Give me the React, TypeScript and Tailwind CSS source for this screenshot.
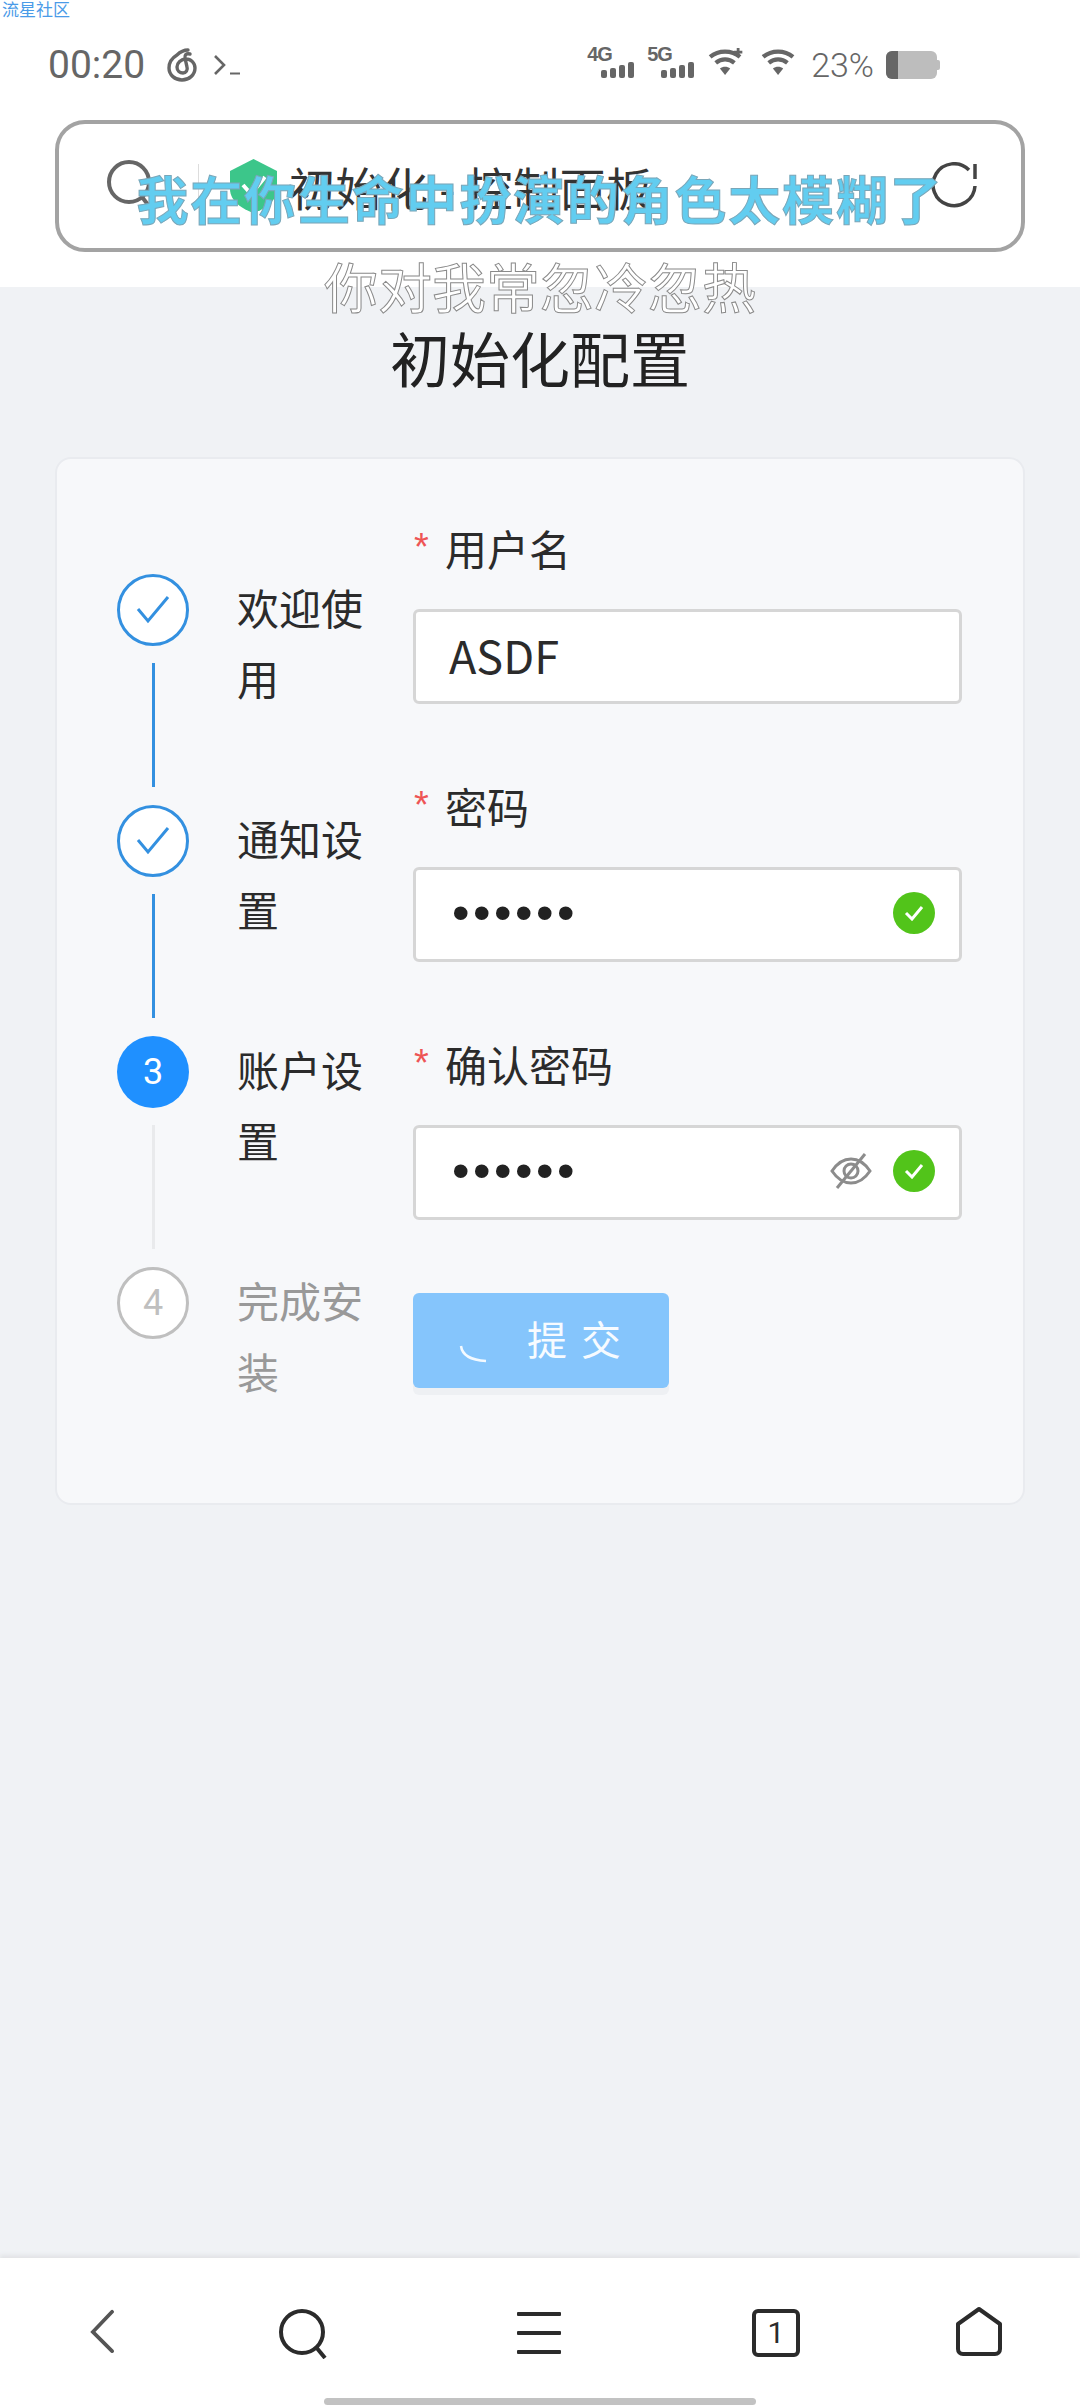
import React from "react";

const cjk = "font-['Noto_Sans_CJK_SC','Noto_Sans',sans-serif]";

const Netease = () => (
  <svg width="30" height="34" viewBox="0 0 30 34" fill="none" stroke="#666" strokeWidth="3.400" strokeLinecap="round">
    <path d="M21 2 C16 2 13 4 10 7 C5 10 2 15 2 20 C2 27 8 32 15 32 C22 32 28 27 28 20 C28 15 24 11 19 11 C14 11 10 15 10 19 C10 23 13 25 16 25 C19 25 21 22 20 19 L18 10 C17.500 7 19 5 23 6" />
  </svg>
);

const Signal = ({ label }: { label: string }) => (
  <div className="relative w-[47px] h-[31px]">
    <span className="absolute left-0 -top-[3px] text-[20px] leading-[20px] font-bold text-[#666] font-['Liberation_Sans',sans-serif] tracking-[-1px]">
      {label}
    </span>
    <div className="absolute right-0 bottom-0 flex items-end gap-[3px]">
      <div className="w-[6px] h-[8px] rounded-[2px] bg-[#666]" />
      <div className="w-[6px] h-[10px] rounded-[2px] bg-[#666]" />
      <div className="w-[6px] h-[13px] rounded-[2px] bg-[#666]" />
      <div className="w-[6px] h-[16px] rounded-[2px] bg-[#666]" />
    </div>
  </div>
);

const Wifi = ({ plus }: { plus?: boolean }) => (
  <svg width="38" height="28" viewBox="0 0 38 30" fill="none" stroke="#666" strokeWidth="4.500">
    <path d="M2 9.500 C11 2 25 2 34 9.500" />
    <path d="M8 16 C14 11 22 11 28 16" />
    <path d="M18 29 L12.500 22 C15.500 19.500 20.500 19.500 23.500 22 Z" fill="#666" stroke="none" />
    {plus && <path d="M32 0 V9 M27.500 4.500 H36.500" stroke="#666" strokeWidth="3" />}
  </svg>
);

const StatusBar = () => (
  <div className="h-[120px] pl-[48px] pr-[140px] pt-[45px] flex items-start justify-between">
    <div className="flex items-center h-[40px]">
      <span className="text-[39px] leading-[40px] text-[#666] font-['Roboto',sans-serif] w-[119px]">00:20</span>
      <Netease />
      <svg className="ml-[16px]" width="28" height="24" viewBox="0 0 28 24" fill="none" stroke="#666" strokeWidth="2.600">
        <path d="M2 3 L11 12 L2 21" />
        <path d="M17 20.500 H27" strokeWidth="2" />
      </svg>
    </div>
    <div className="flex items-center h-[40px] -mt-[3px]">
      <Signal label="4G" />
      <div className="ml-[13px]"><Signal label="5G" /></div>
      <div className="ml-[13px]"><Wifi plus /></div>
      <div className="ml-[15px]"><Wifi /></div>
      <span className="ml-[13px] mt-[5px] text-[34px] leading-[40px] text-[#666] font-['Roboto',sans-serif] font-light">23%</span>
      <div className="ml-[12px] mt-[5px] flex items-center">
        <div className="w-[51px] h-[28px] rounded-[6px] bg-[#bdbdbd] overflow-hidden">
          <div className="w-[12px] h-full bg-[#666]" />
        </div>
        <div className="w-[3px] h-[10px] rounded-r-[2px] bg-[#bdbdbd]" />
      </div>
    </div>
  </div>
);

const AddressBar = () => (
  <div className="mx-[55px] h-[132px] rounded-[30px] border-4 border-[#a3a3a3] bg-white flex items-center pl-[47px] pr-[43px]">
    <svg className="-mt-[5px]" width="46" height="50" viewBox="0 0 46 50" fill="none" stroke="#666" strokeWidth="4">
      <circle cx="23" cy="23" r="20" />
      <path d="M36 38 L43 47" />
    </svg>
    <div className="ml-[46px] w-px h-[44px] bg-[#ddd]" />
    <svg className="ml-[31px]" width="47" height="54" viewBox="0 0 47 54">
      <path d="M23.500 0 L47 12 V30 C47 42 35 50 23.500 54 C12 50 0 42 0 30 V12 Z" fill="#3cc68a" />
      <path d="M13 26 L21 35 L35 18" fill="none" stroke="#fff" strokeWidth="4" />
    </svg>
    <span className={`ml-[12px] flex-1 text-[46px] leading-[60px] tracking-[0.500px] text-[#333] whitespace-nowrap ${cjk}`}>初始化 - 控制面板</span>
    <svg width="48" height="48" viewBox="0 0 48 48" fill="none" stroke="#444" strokeWidth="3.500">
      <path d="M39 8 A21 21 0 1 0 45 24" />
      <path d="M45 2 V17" />
    </svg>
  </div>
);

type StepState = "done" | "active" | "todo";

const steps: { title: string; state: StepState; no: number; line?: "blue" | "gray" }[] = [
  { title: "欢迎使用", state: "done", no: 1, line: "blue" },
  { title: "通知设置", state: "done", no: 2, line: "blue" },
  { title: "账户设置", state: "active", no: 3, line: "gray" },
  { title: "完成安装", state: "todo", no: 4 },
];

const Step = ({ title, state, no, line }: (typeof steps)[number]) => (
  <div className="flex h-[231px]">
    <div className="w-[72px] flex flex-col items-center">
      {state === "done" && (
        <div className="w-[72px] h-[72px] rounded-full border-[3px] border-[#3390e0] bg-white flex items-center justify-center">
          <svg width="36" height="30" viewBox="0 0 36 30" fill="none" stroke="#3390e0" strokeWidth="3">
            <path d="M3 14 L13 26 L33 2" />
          </svg>
        </div>
      )}
      {state === "active" && (
        <div className="w-[72px] h-[72px] rounded-full bg-[#1f90ff] flex items-center justify-center text-[36px] text-white font-['Roboto',sans-serif]">
          {no}
        </div>
      )}
      {state === "todo" && (
        <div className="w-[72px] h-[72px] rounded-full border-[3px] border-[#bfbfbf] bg-white flex items-center justify-center text-[36px] text-[#bfbfbf] font-['Roboto',sans-serif]">
          {no}
        </div>
      )}
      {line && (
        <div className={`ml-[1px] mt-[17px] w-[3px] h-[124px] ${line === "blue" ? "bg-[#3390e0]" : "bg-[#e9eaec]"}`} />
      )}
    </div>
    <div className={`ml-[48px] -mt-[3px] w-[128px] text-[42px] leading-[71px] ${state === "todo" ? "text-[#999]" : "text-[#2b2b2b]"} ${cjk}`}>
      {title}
    </div>
  </div>
);

const CheckDot = () => (
  <div className="w-[42px] h-[42px] rounded-full bg-[#52c41a] flex items-center justify-center">
    <svg width="20" height="16" viewBox="0 0 20 16" fill="none" stroke="#fff" strokeWidth="3">
      <path d="M2 8 L8 14 L18 2" />
    </svg>
  </div>
);

const Field = ({ label, children }: { label: string; children: React.ReactNode }) => (
  <div className="mb-[71px]">
    <div className={`h-[60px] mb-[32px] flex items-center text-[42px] text-[#2b2b2b] ${cjk}`}>
      <span className="w-[32px] text-[#ee5555] text-[38px] pl-[1px] font-['Liberation_Sans',sans-serif]">*</span>
      {label}
    </div>
    <div className="h-[95px] bg-white border-[3px] border-[#d6d6d6] rounded-[6px] flex items-center pl-[33px] pr-[24px] pb-[3px]">
      {children}
    </div>
  </div>
);

const Dots = () => (
  <span className="flex-1 pl-[3px] text-[#222] text-[50px] leading-[40px] tracking-[3.500px] font-['Liberation_Sans',sans-serif]">
    ••••••
  </span>
);

const Form = () => (
  <div className="w-[549px] pt-[58px]">
    <Field label="用户名">
      <span className={`text-[45px] text-[#2b2b2b] ${cjk}`}>ASDF</span>
    </Field>
    <Field label="密码">
      <Dots />
      <CheckDot />
    </Field>
    <Field label="确认密码">
      <Dots />
      <svg className="mr-[21px]" width="42" height="38" viewBox="0 0 42 38" fill="none" stroke="#8c8c8c" strokeWidth="3">
        <path d="M2 19 C8 10 14 7 21 7 C28 7 34 10 40 19 C34 28 28 31 21 31 C14 31 8 28 2 19 Z" />
        <circle cx="21" cy="19" r="7" />
        <path d="M35 2 L7 36" />
      </svg>
      <CheckDot />
    </Field>
    <div className="mt-[73px] w-[256px] h-[95px] rounded-[6px] bg-[#85c5fc] shadow-[0_7px_0_#eef0f3] flex items-center pl-[46px]">
      <svg className="mt-[26px]" width="28" height="18" viewBox="0 0 28 18" fill="none" stroke="#f4faff" strokeWidth="2.500">
        <path d="M2 1 C3 9 10 15 27 16" />
      </svg>
      <span className={`ml-[40px] -mt-[5px] text-[40px] leading-[50px] tracking-[14px] text-[#f7fbff] ${cjk}`}>提交</span>
    </div>
  </div>
);

const BottomNav = () => (
  <div className="h-[150px] bg-white shadow-[0_-3px_4px_#e2e3e6] flex flex-col">
    <div className="h-[140px] flex items-start pl-[88px] pt-[51px]">
      <svg width="28" height="44" viewBox="0 0 28 48" fill="none" stroke="#555" strokeWidth="4" strokeLinecap="round">
        <path d="M25 3 L4 25 L25 46" />
      </svg>
      <svg className="ml-[163px]" width="50" height="50" viewBox="0 0 50 50" fill="none" stroke="#2b2b2b" strokeWidth="4">
        <circle cx="23" cy="23" r="21" />
        <path d="M37 38 L46 49" />
      </svg>
      <div className="ml-[188px] w-[44px] h-[42px] mt-[3px] flex flex-col justify-between">
        <div className="h-[4px] bg-[#2b2b2b] rounded-[1px]" />
        <div className="h-[4px] bg-[#2b2b2b] rounded-[1px]" />
        <div className="h-[4px] bg-[#2b2b2b] rounded-[1px]" />
      </div>
      <div className="ml-[191px] w-[48px] h-[48px] border-4 border-[#2b2b2b] rounded-[6px] flex items-center justify-center text-[30px] leading-none text-[#2b2b2b] font-['Roboto',sans-serif]">
        1
      </div>
      <svg className="ml-[155px] -mt-[2px]" width="48" height="50" viewBox="0 0 48 50" fill="none" stroke="#2b2b2b" strokeWidth="4" strokeLinejoin="round">
        <path d="M24 2 L45 17 V42 C45 45 43 47 40 47 H8 C5 47 3 45 3 42 V17 Z" />
      </svg>
    </div>
    <div className="w-[432px] h-[7px] mx-auto rounded-full bg-[#c2c2c2]" />
  </div>
);

export default function App() {
  return (
    <div className="relative w-[1080px] h-[2408px] flex flex-col bg-white overflow-hidden">
      <span className={`absolute left-[2px] top-0 text-[17px] leading-[17px] text-[#4a9be8] ${cjk}`}>流星社区</span>

      <div className="h-[287px] bg-white">
        <StatusBar />
        <AddressBar />
      </div>

      <div className="flex-1 bg-[#f0f2f5] flex flex-col items-center">
        <h1 className={`h-[170px] pt-[27px] text-[60px] leading-[86px] font-normal text-[#222] ${cjk}`}>初始化配置</h1>
        <div className="w-[970px] h-[1048px] bg-[#f7f8fa] border-2 border-[#e9ebef] rounded-[16px] flex pl-[60px]">
          <div className="w-[296px] pt-[115px]">
            {steps.map((s) => (
              <Step key={s.no} {...s} />
            ))}
          </div>
          <Form />
        </div>
      </div>

      <BottomNav />

      {/* lyrics overlay */}
      <div className={`absolute left-0 top-[166px] w-full text-center text-[52px] leading-[64px] font-bold tracking-[1.800px] text-[#62cdf0] [-webkit-text-stroke:1px_#7aa6b8] ${cjk}`}>
        我在你生命中扮演的角色太模糊了
      </div>
      <div className={`absolute left-0 top-[254px] w-full text-center text-[54px] leading-[64px] font-normal text-white [-webkit-text-stroke:1px_#8a8a8a] ${cjk}`}>
        你对我常忽冷忽热
      </div>
    </div>
  );
}
